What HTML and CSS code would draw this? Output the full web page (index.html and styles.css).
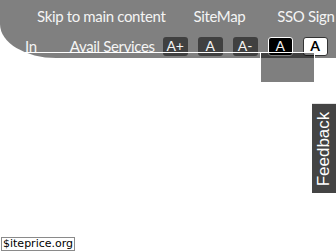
FILE: index.html
```html
<!DOCTYPE html>
<html>
<head>
<meta charset="utf-8">
<link rel="stylesheet" href="styles.css">
</head>
<body>
<header class="topbar">
  <div class="row row-one">
    <a class="link" href="#">Skip to main content</a>
    <a class="link link-site" href="#">SiteMap</a>
    <a class="link link-sso" href="#">SSO Sign</a>
  </div>
  <div class="row row-two">
    <a class="link" href="#">In</a>
    <a class="link link-avail" href="#">Avail Services</a>
    <div class="sizes">
      <span class="btn btn-dark">A+</span>
      <span class="btn btn-dark">A</span>
      <span class="btn btn-dark">A-</span>
      <span class="btn btn-black">A</span>
      <span class="btn btn-white">A</span>
    </div>
  </div>
</header>
<div class="menu-line"></div>
<div class="menu-drop"></div>
<div class="feedback"><span class="feedback-text">Feedback</span></div>
<div class="watermark">$iteprice.org</div>
</body>
</html>
```
FILE: styles.css
```css
html, body {
  margin: 0;
  padding: 0;
  background: #ffffff;
  width: 336px;
  height: 252px;
  overflow: hidden;
  font-family: Lato, "Open Sans", sans-serif;
}
.topbar {
  background: #808080;
  height: 58px;
  border-bottom-left-radius: 56px 34px;
  box-sizing: border-box;
  padding-top: 6px;
}
.row {
  display: flex;
  align-items: center;
  white-space: nowrap;
}
.row-one {
  padding-left: 37px;
  height: 20px;
}
.row-two {
  padding-left: 25px;
  margin-top: 10px;
  height: 20px;
}
.link {
  color: #f4f4f4;
  text-decoration: none;
  font-size: 15px;
  line-height: 20px;
  letter-spacing: -0.35px;
}
.link-site {
  margin-left: 28px;
}
.link-sso {
  margin-left: 32px;
}
.link-avail {
  margin-left: 33px;
}
.sizes {
  display: flex;
  gap: 10px;
  margin-left: 8px;
}
.btn {
  width: 25px;
  height: 19px;
  box-sizing: border-box;
  border-radius: 3px;
  display: flex;
  align-items: center;
  justify-content: center;
  font-size: 14px;
  line-height: 1;
  color: #f4f4f4;
}
.btn-dark {
  background: #404040;
}
.btn-black {
  background: #000000;
  border: 1px solid #ffffff;
}
.btn-white {
  background: #ffffff;
  color: #000000;
  font-weight: bold;
  border: 1px solid #333333;
}
.menu-line {
  position: absolute;
  left: 25px;
  top: 52px;
  width: 290px;
  height: 1px;
  background: #ffffff;
}
.menu-drop {
  position: absolute;
  left: 260px;
  top: 53px;
  width: 55px;
  height: 29px;
  box-sizing: border-box;
  background: rgba(0, 0, 0, 0.5);
  border-left: 1px solid #ffffff;
  border-right: 1px solid #ffffff;
}
.feedback {
  position: absolute;
  right: 0;
  top: 103px;
  width: 24px;
  height: 89px;
  background: #444444;
  border-top: 1px solid #e4e4e4;
  display: flex;
  align-items: center;
  justify-content: center;
}
.feedback-text {
  transform: rotate(-90deg);
  color: #ffffff;
  font-family: "Liberation Sans", Arial, sans-serif;
  font-size: 17px;
  white-space: nowrap;
}
.watermark {
  position: absolute;
  left: 1px;
  bottom: 1px;
  border: 1px solid #8a8a8a;
  background: #ffffff;
  color: #000000;
  font-family: "DejaVu Sans", sans-serif;
  font-size: 11px;
  line-height: 12px;
  padding: 0 1px;
}
```
